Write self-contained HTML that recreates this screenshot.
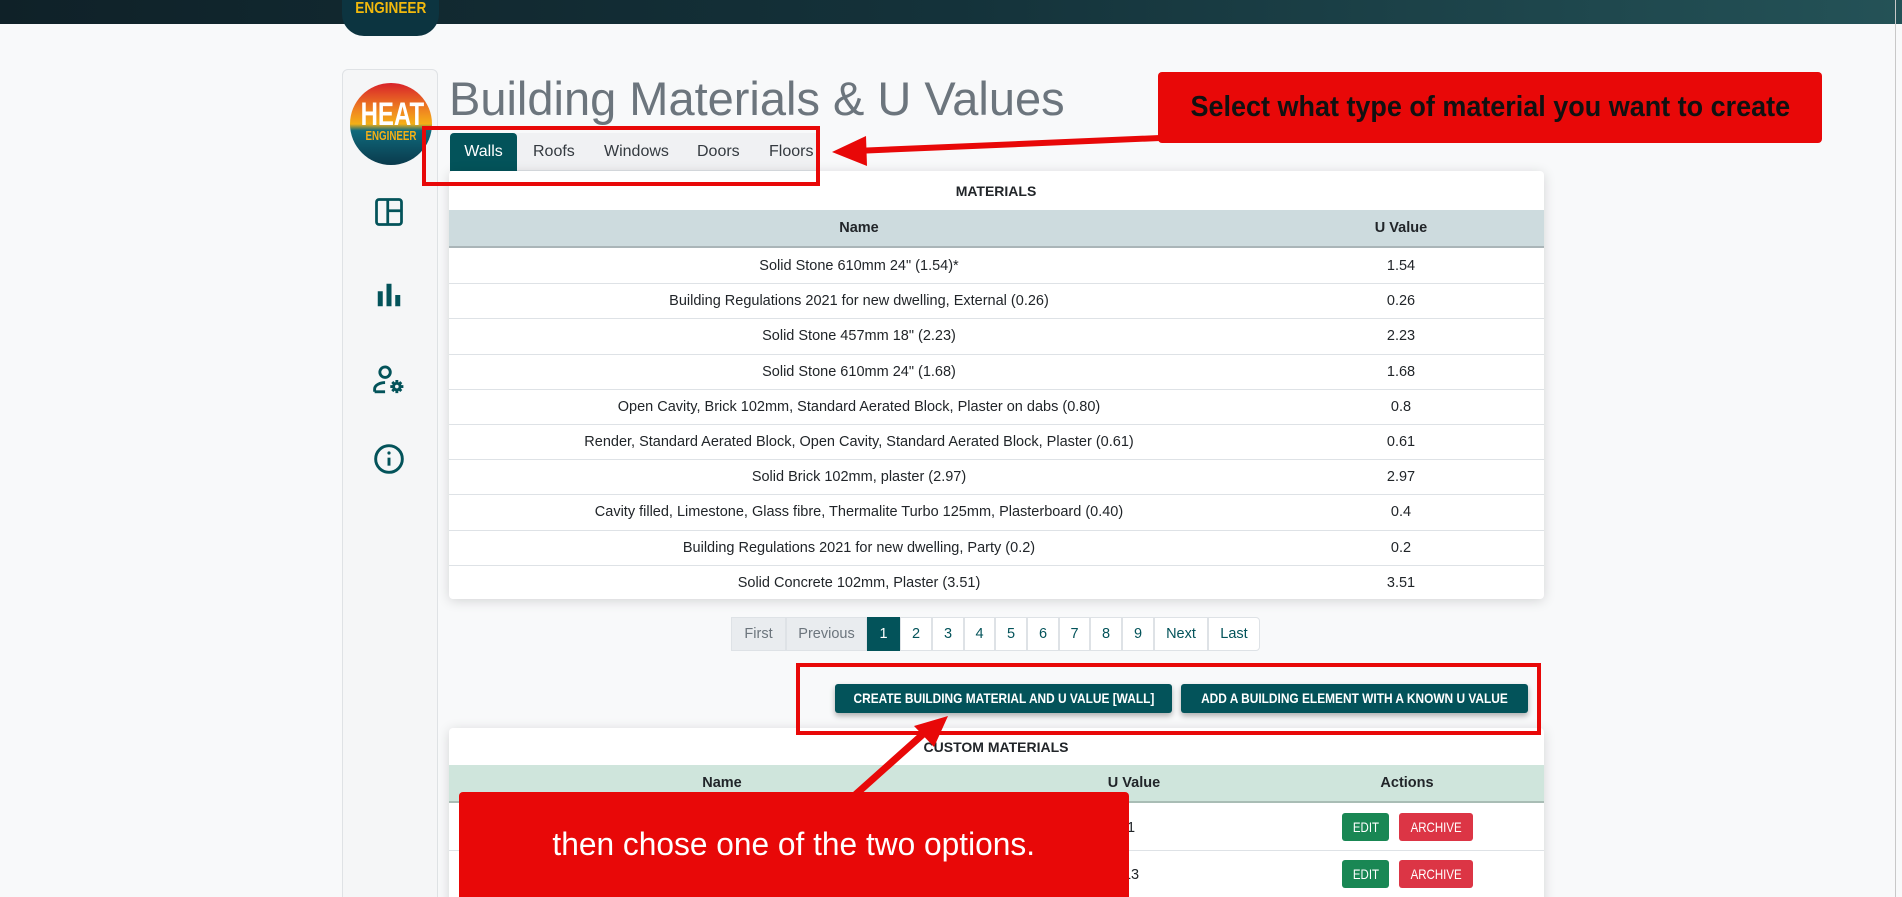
<!DOCTYPE html>
<html style="width:1902px;height:897px;overflow:hidden"><head><meta charset="utf-8"><style>
*{box-sizing:border-box;margin:0;padding:0}
body{width:1902px;height:897px;overflow:hidden;background:#f8f9fa;font-family:"Liberation Sans",sans-serif;position:relative;color:#212529}
.a{position:absolute}
.top{left:0;top:0;width:1902px;height:24px;background:linear-gradient(90deg,#0f2128,#14323a 50%,#245257)}
.tlogo{left:342px;top:-10px;width:97px;height:46px;border-radius:0 0 22px 22px;background:#0c3440;color:#f2b90c;font-weight:bold;font-size:16px;text-align:center;padding-top:10px;overflow:hidden}
.side{left:342px;top:69px;width:96px;height:840px;background:#f5f6f7;border:1px solid #dfe2e5;border-radius:6px}
.logo{left:350px;top:83px;width:82px;height:82px;border-radius:50%;background:linear-gradient(180deg,#d8222a 0%,#f08a20 35%,#f5b016 50%,#0f6a7c 58%,#0a3a4c 100%);text-align:center;color:#fff;font-weight:bold;overflow:hidden}
.n{display:inline-block;transform:scaleX(.75);transform-origin:center}
.card{background:#fff;box-shadow:0 2px 12px rgba(0,0,0,.15);border-radius:4px}
.t{font-size:14.5px;text-align:center;position:absolute;transform:translateX(-50%);white-space:nowrap}
.row{position:absolute;left:0;width:1095px;height:35px;border-top:1px solid #dee2e6}
.pg{position:absolute;top:617px;height:34px;border:1px solid #dee2e6;margin-left:-1px;font-size:14.5px;color:#03535a;text-align:center;line-height:32px;background:#fff}
.btn{position:absolute;top:684px;height:29px;background:#03535a;color:#fff;font-weight:bold;font-size:14px;line-height:29px;text-align:center;border-radius:3px;box-shadow:0 3px 6px rgba(0,0,0,.3);white-space:nowrap;overflow:hidden;display:flex;justify-content:center}
.btn span{display:inline-block;transform:scaleX(.85);flex:none}
.red{border:4px solid #e80808;z-index:5}
.sm{position:absolute;height:28px;color:#fff;font-size:14px;line-height:28px;text-align:center;border-radius:3px;overflow:hidden}
.sm span{display:inline-block;transform:scaleX(.82)}
</style></head><body>
<div class="a top"></div>
<div class="a tlogo"><span class="n" style="transform:scaleX(.85)">ENGINEER</span></div>
<div class="a side"></div>
<div class="a logo"><div style="font-size:32px;margin-top:16px;line-height:30px"><span class="n">HEAT</span></div><div style="font-size:13px;color:#f5b016;line-height:13px"><span class="n">ENGINEER</span></div></div>
<svg class="a" style="left:374px;top:197px" width="30" height="30" viewBox="0 0 24 24" fill="none" stroke="#03535a" stroke-width="2.2"><rect x="2" y="2" width="20" height="20" rx="2"/><path d="M11 2v20M11 11h11"/></svg>
<svg class="a" style="left:374px;top:280px" width="30" height="30" viewBox="0 0 24 24" fill="#03535a"><rect x="3" y="9" width="4" height="12"/><rect x="10" y="3" width="4" height="18"/><rect x="17" y="12" width="4" height="9"/></svg>
<svg class="a" style="left:372px;top:364px" width="34" height="32" viewBox="0 0 26 24" fill="none" stroke="#03535a" stroke-width="2.2"><circle cx="10" cy="6" r="4"/><path d="M2 21v-2c0-3 4-5 8-5"/><path d="M2 21h8"/><circle cx="19" cy="17" r="2.5"/><path d="M19 12v2M19 20v2M14 17h2M22 17h2M15.5 13.5l1.4 1.4M21 19l1.4 1.4M15.5 20.5l1.4-1.4M21 15l1.4-1.4"/></svg>
<svg class="a" style="left:373px;top:443px" width="32" height="32" viewBox="0 0 24 24" fill="none" stroke="#03535a" stroke-width="2.2"><circle cx="12" cy="12" r="10"/><path d="M12 11v6"/><circle cx="12" cy="7.5" r="1.2" fill="#03535a" stroke="none"/></svg>

<div class="a" style="left:449px;top:71px;font-size:47px;color:#6c757d;white-space:nowrap">Building Materials &amp; U Values</div>
<div class="a" style="left:450px;top:133px;width:370px;height:38px;background:#f0f1f3;border-bottom:1px solid #dee2e6"></div>
<div class="a" style="left:450px;top:133px;width:67px;height:38px;background:#03535a;color:#fff;font-size:16px;line-height:38px;text-align:center;border-radius:4px 4px 0 0">Walls</div>
<div class="a" style="left:533px;top:143px;font-size:16px;color:#343a40">Roofs</div>
<div class="a" style="left:604px;top:143px;font-size:16px;color:#343a40">Windows</div>
<div class="a" style="left:697px;top:143px;font-size:16px;color:#343a40">Doors</div>
<div class="a" style="left:769px;top:143px;font-size:16px;color:#343a40">Floors</div>
<div class="a red" style="left:422px;top:126px;width:398px;height:60px"></div>

<div class="a card" style="left:449px;top:171px;width:1095px;height:428px">
<div class="t" style="left:547px;top:12px;font-weight:bold;font-size:14px">MATERIALS</div>
<div class="a" style="left:0;top:39px;width:1095px;height:38px;background:#cddbde;border-bottom:2px solid #aab5b8"></div>
<div class="t" style="left:410px;top:49px;font-weight:bold">Name</div>
<div class="t" style="left:952px;top:49px;font-weight:bold">U Value</div>
<div id="rows"></div>
</div>

<div class="pg" style="left:732px;width:55px;background:#e9ecef;color:#6c757d">First</div>
<div class="pg" style="left:787px;width:81px;background:#e9ecef;color:#6c757d">Previous</div>
<div class="pg" style="left:868px;width:33px;background:#03535a;color:#fff;border-color:#03535a">1</div>
<div class="pg" style="left:901px;width:32px">2</div>
<div class="pg" style="left:933px;width:32px">3</div>
<div class="pg" style="left:965px;width:31px">4</div>
<div class="pg" style="left:996px;width:32px">5</div>
<div class="pg" style="left:1028px;width:32px">6</div>
<div class="pg" style="left:1060px;width:31px">7</div>
<div class="pg" style="left:1091px;width:32px">8</div>
<div class="pg" style="left:1123px;width:32px">9</div>
<div class="pg" style="left:1155px;width:54px">Next</div>
<div class="pg" style="left:1209px;width:52px;border-radius:0 4px 4px 0">Last</div>

<div class="btn" style="left:835px;width:337px"><span>CREATE BUILDING MATERIAL AND U VALUE [WALL]</span></div>
<div class="btn" style="left:1181px;width:347px"><span>ADD A BUILDING ELEMENT WITH A KNOWN U VALUE</span></div>
<div class="a red" style="left:796px;top:663px;width:745px;height:72px"></div>

<div class="a card" style="left:449px;top:728px;width:1095px;height:200px">
<div class="t" style="left:547px;top:11px;font-weight:bold;font-size:14px">CUSTOM MATERIALS</div>
<div class="a" style="left:0;top:37px;width:1095px;height:38px;background:#cfe5dc;border-bottom:2px solid #a9bdb5"></div>
<div class="t" style="left:273px;top:47px;font-weight:bold">Name</div>
<div class="t" style="left:685px;top:47px;font-weight:bold">U Value</div>
<div class="t" style="left:958px;top:47px;font-weight:bold">Actions</div>
<div class="t" style="left:676px;top:92px">0.1</div>
<div class="row" style="top:122px;height:46px"></div>
<div class="t" style="left:676px;top:139px">0.13</div>
</div>
<div class="sm" style="left:1342px;top:813px;width:47px;background:#198754"><span>EDIT</span></div>
<div class="sm" style="left:1399px;top:813px;width:74px;background:#dc3545"><span>ARCHIVE</span></div>
<div class="sm" style="left:1342px;top:860px;width:47px;background:#198754"><span>EDIT</span></div>
<div class="sm" style="left:1399px;top:860px;width:74px;background:#dc3545"><span>ARCHIVE</span></div>

<div class="a" style="z-index:6;left:1158px;top:72px;width:664px;height:71px;background:#e80808;border-radius:4px;color:#111;font-weight:bold;font-size:29px;line-height:71px;text-align:center;white-space:nowrap"><span style="display:inline-block;transform:scaleX(.93)">Select what type of material you want to create</span></div>
<div class="a" style="z-index:6;left:459px;top:792px;width:670px;height:110px;background:#e80808;border-radius:4px;color:#fff;font-size:32px;line-height:104px;text-align:center;white-space:nowrap"><span style="display:inline-block;transform:scaleX(.99)">then chose one of the two options.</span></div>
<svg class="a" style="left:0;top:0;z-index:7" width="1902" height="897">
<line x1="1160" y1="138" x2="855" y2="151" stroke="#e80808" stroke-width="6"/>
<polygon points="832,152 866,136 867,166" fill="#e80808"/>
<line x1="855" y1="795" x2="930" y2="728" stroke="#e80808" stroke-width="7"/>
<polygon points="948,716 914,726 934,747" fill="#e80808"/>
</svg>
<div class="a" style="left:1895px;top:0;width:1px;height:897px;background:#c8c8c8"></div>
<script>
var d=[["Solid Stone 610mm 24\" (1.54)*","1.54"],["Building Regulations 2021 for new dwelling, External (0.26)","0.26"],["Solid Stone 457mm 18\" (2.23)","2.23"],["Solid Stone 610mm 24\" (1.68)","1.68"],["Open Cavity, Brick 102mm, Standard Aerated Block, Plaster on dabs (0.80)","0.8"],["Render, Standard Aerated Block, Open Cavity, Standard Aerated Block, Plaster (0.61)","0.61"],["Solid Brick 102mm, plaster (2.97)","2.97"],["Cavity filled, Limestone, Glass fibre, Thermalite Turbo 125mm, Plasterboard (0.40)","0.4"],["Building Regulations 2021 for new dwelling, Party (0.2)","0.2"],["Solid Concrete 102mm, Plaster (3.51)","3.51"]];
var h="";for(var i=0;i<10;i++){var t=77+i*35.2;h+='<div class="row" style="top:'+t+'px'+(i==0?';border:0':'')+'"></div><div class="t" style="left:410px;top:'+(t+10)+'px">'+d[i][0]+'</div><div class="t" style="left:952px;top:'+(t+10)+'px">'+d[i][1]+'</div>';}
document.getElementById("rows").outerHTML=h;
</script>
</body></html>
